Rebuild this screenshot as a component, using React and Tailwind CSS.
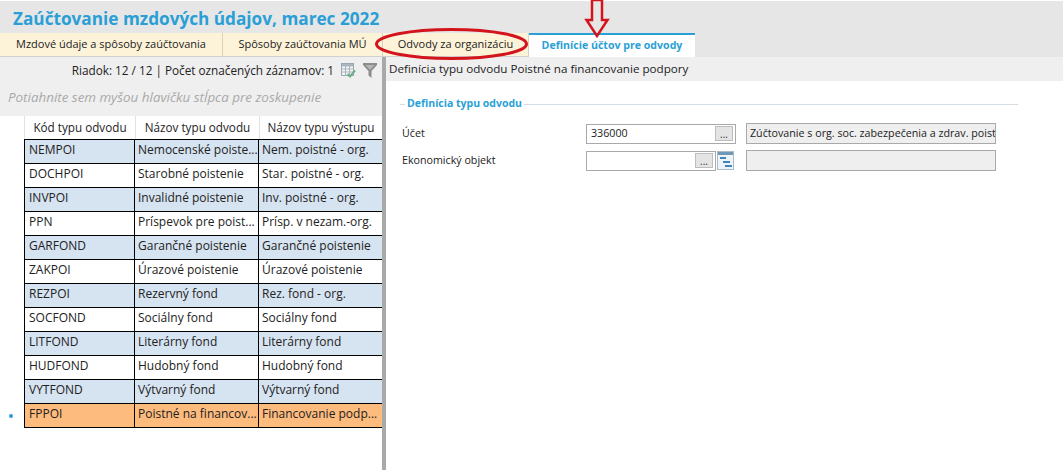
const tabs = ["Mzdové údaje a spôsoby zaúčtovania", "Spôsoby zaúčtovania MÚ", "Odvody za organizáciu"];

const rows = [
  ["NEMPOI", "Nemocenské poiste...", "Nem. poistné - org."],
  ["DOCHPOI", "Starobné poistenie", "Star. poistné - org."],
  ["INVPOI", "Invalidné poistenie", "Inv. poistné - org."],
  ["PPN", "Príspevok pre poist...", "Prísp. v nezam.-org."],
  ["GARFOND", "Garančné poistenie", "Garančné poistenie"],
  ["ZAKPOI", "Úrazové poistenie", "Úrazové poistenie"],
  ["REZPOI", "Rezervný fond", "Rez. fond - org."],
  ["SOCFOND", "Sociálny fond", "Sociálny fond"],
  ["LITFOND", "Literárny fond", "Literárny fond"],
  ["HUDFOND", "Hudobný fond", "Hudobný fond"],
  ["VYTFOND", "Výtvarný fond", "Výtvarný fond"],
  ["FPPOI", "Poistné na financov...", "Financovanie podp..."],
];

function GridIcon() {
  return (
    <svg width="15" height="15" viewBox="0 0 15 15" className="shrink-0">
      <rect x="0.5" y="0.5" width="12" height="12" fill="#f4f6f8" stroke="#9aa6b0" />
      <rect x="1" y="1" width="11" height="2.5" fill="#aab6c0" />
      <path d="M0.5 6H12.5M0.5 9H12.5M4.5 3V12.5M8.5 3V12.5" stroke="#aab4bd" fill="none" />
      <path d="M6.5 11L9 13.5L14 7.5" stroke="#6fae8a" strokeWidth="2" fill="none" />
    </svg>
  );
}

function FilterIcon() {
  return (
    <svg width="14" height="15" viewBox="0 0 14 15" className="shrink-0">
      <path d="M0 0H14V2L8.5 8V15L5.5 12.5V8L0 2Z" fill="#8c8c8c" />
      <path d="M2.5 2H11.5L7 7Z" fill="#b5b5b5" />
    </svg>
  );
}

function TreeIcon() {
  return (
    <svg width="17" height="19" viewBox="0 0 17 19" className="shrink-0">
      <rect x="0.5" y="0.5" width="16" height="18" fill="#eef3f7" stroke="#a9bccb" />
      <rect x="1" y="1" width="15" height="3" fill="#6f97b8" />
      <rect x="3" y="6" width="6" height="2" fill="#3d86b8" />
      <rect x="6" y="10" width="7" height="2" fill="#3d86b8" />
      <rect x="8" y="14" width="7" height="2" fill="#3d86b8" />
    </svg>
  );
}

function DotsButton() {
  return (
    <div className="w-[18px] h-[15px] bg-[#e4e4e4] border border-[#bdbdbd] flex items-end justify-center text-[10px] leading-[12px] text-[#333] shrink-0">
      ...
    </div>
  );
}

function GridRow({ row, index }) {
  const selected = index === rows.length - 1;
  const bg = selected ? "bg-[#fdbb7e]" : index % 2 === 0 ? "bg-[#d6e3f1]" : "bg-white";
  return (
    <div className="flex h-[24px]">
      <div className="w-[24px] flex items-center justify-center">
        {selected && <div className="w-[4px] h-[4px] rounded-full bg-[#2a9fd6] ml-[-2px]" />}
      </div>
      <div className={`flex flex-1 border-b border-l border-black ${bg}`}>
        <div className="w-[110px] pl-[4px] border-r border-black truncate leading-[20px]">{row[0]}</div>
        <div className="w-[124px] pl-[3px] border-r border-black truncate leading-[20px]">{row[1]}</div>
        <div className="flex-1 pl-[3px] whitespace-nowrap overflow-hidden leading-[20px]">{row[2]}</div>
      </div>
    </div>
  );
}

export default function App() {
  return (
    <div className="relative w-[1063px] h-[470px] overflow-hidden bg-white text-[12px] text-[#222] font-['Open_Sans','Noto_Sans',sans-serif]">
      <div className="h-[32px] mt-px bg-[#e6e6e6] pl-[13px] pt-[3px] flex items-center">
        <h1 className="text-[17.2px] font-bold text-[#2a9fd6] leading-none">Zaúčtovanie mzdových údajov, marec 2022</h1>
      </div>

      <div className="flex h-[24px] bg-[#e6e6e6] text-[11px]">
        {tabs.map((t, i) => (
          <div
            key={t}
            className={`flex items-center justify-center bg-[#fdf3d9] border-r border-b border-r-[#d9d2bd] border-b-[#d0d0d0] ${["w-[223px]", "w-[160px]", "w-[146px]"][i]}`}
          >
            {t}
          </div>
        ))}
        <div className="w-[166px] bg-white border-t-2 border-[#2a9fd6] flex items-center justify-center font-bold text-[10.6px] text-[#2a9fd6]">
          Definície účtov pre odvody
        </div>
      </div>

      <div className="flex h-[413px]">
        <div className="w-[382px] flex flex-col">
          <div className="h-[59px] bg-[#efefef]">
            <div className="flex items-center justify-end h-[27px] gap-[7px] pr-[5px]">
              <span className="text-[11.75px]">Riadok: 12 / 12 | Počet označených záznamov: 1</span>
              <GridIcon />
              <FilterIcon />
            </div>
            <div className="pl-[8px] pt-[3px] text-[13.4px] leading-[20px] italic text-[#a9a9a9]">Potiahnite sem myšou hlavičku stĺpca pre zoskupenie</div>
          </div>
          <div className="flex h-[23px] text-[11.7px]">
            <div className="w-[24px]" />
            <div className="w-[111px] flex items-center justify-center bg-white border-l border-[#e2e2e2]">Kód typu odvodu</div>
            <div className="w-[124px] flex items-center justify-center border-l border-[#e2e2e2]">Názov typu odvodu</div>
            <div className="flex-1 flex items-center justify-center border-l border-[#e2e2e2]">Názov typu výstupu</div>
          </div>
          <div className="border-t border-black ml-[24px]" />
          {rows.map((r, i) => (
            <GridRow key={r[0]} row={r} index={i} />
          ))}
        </div>

        <div className="w-[4px] bg-[#a9a9a9]" />

        <div className="flex-1 flex flex-col">
          <div className="h-[24px] bg-[#efefef] flex items-center pl-[3px] text-[11.65px]">
            Definícia typu odvodu Poistné na financovanie podpory
          </div>
          <div className="pl-[14px] pt-[15px] w-[632px] text-[10.7px]">
            <div className="flex items-center gap-[2px] h-[16px] mb-[11px]">
              <div className="w-[5px] h-px bg-[#d5dde4]" />
              <span className="font-bold text-[10.5px] text-[#2a9fd6]">Definícia typu odvodu</span>
              <div className="flex-1 h-px bg-[#d5dde4]" />
            </div>
            <div className="flex items-center h-[21px] mb-[6px] pl-[2px]">
              <span className="w-[184px]">Účet</span>
              <div className="w-[150px] h-[20px] border border-[#a9a9a9] flex items-center justify-between pl-[4px] pr-[2px]">
                <span>336000</span>
                <DotsButton />
              </div>
              <div className="w-[250px] h-[21px] ml-[10px] bg-[#efefef] border border-[#a9a9a9] flex items-center pl-[3px] whitespace-nowrap overflow-hidden">
                Zúčtovanie s org. soc. zabezpečenia a zdrav. poist
              </div>
            </div>
            <div className="flex items-center h-[21px] pl-[2px]">
              <span className="w-[184px]">Ekonomický objekt</span>
              <div className="w-[130px] h-[20px] border border-[#a9a9a9] flex items-center justify-end pr-[2px]">
                <DotsButton />
              </div>
              <div className="ml-[1px] w-[29px]"><TreeIcon /></div>
              <div className="w-[250px] h-[21px] bg-[#efefef] border border-[#a9a9a9]" />
            </div>
          </div>
        </div>
      </div>

      {/* red marks drawn over the screenshot */}
      <svg width="1063" height="470" className="absolute inset-0 pointer-events-none">
        <ellipse cx="451.5" cy="44" rx="75" ry="14.5" fill="none" stroke="#d3141c" strokeWidth="3" />
        <path d="M592 0V20H586.5L597 36L607.5 20H602V0Z" fill="none" stroke="#d3141c" strokeWidth="2.5" />
      </svg>
    </div>
  );
}
